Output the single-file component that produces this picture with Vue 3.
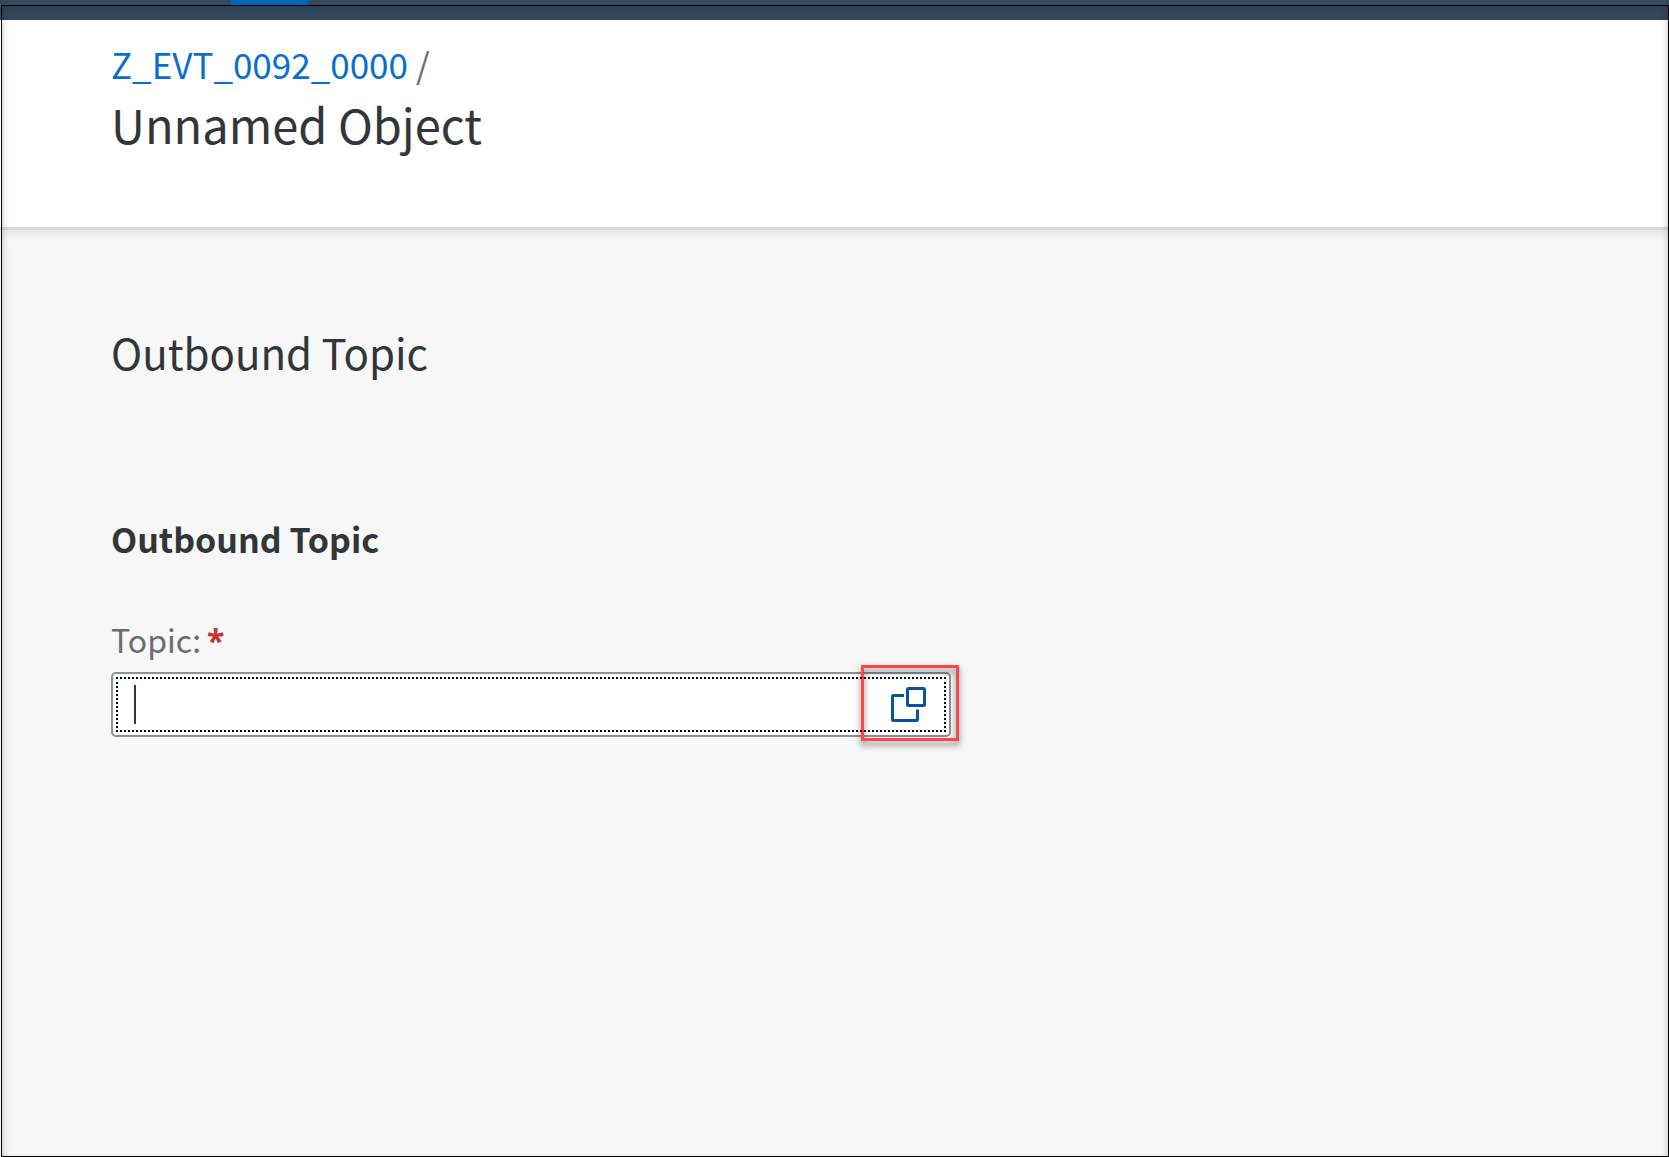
<script setup>
import { ref } from 'vue'

const topic = ref('')
</script>

<template>
  <div class="page">
    <div class="shell"></div>
    <header class="header">
      <nav class="crumbs" aria-label="Breadcrumb">
        <a href="#">Z_EVT_0092_0000</a>
        <span>/</span>
      </nav>
      <h1>Unnamed Object</h1>
    </header>
    <main class="content">
      <h2>Outbound Topic</h2>
      <form @submit.prevent>
        <h3>Outbound Topic</h3>
        <label for="topic">Topic:<b>*</b></label>
        <div class="field">
          <input id="topic" v-model="topic" type="text" required autocomplete="off" />
          <button type="button" aria-label="Select topic">
            <svg viewBox="0 0 36 36" fill="none" stroke="#0854a0" stroke-width="3" stroke-linejoin="round" stroke-linecap="butt">
              <path d="M14 8.500H3.500Q2.500 8.500 2.500 9.500V32.500Q2.500 33.500 3.500 33.500H26.500Q27.500 33.500 27.500 32.500V22.500" />
              <rect x="17.500" y="1.500" width="17" height="17" rx="1" />
            </svg>
          </button>
          <i class="caret"></i>
          <i class="highlight"></i>
        </div>
      </form>
    </main>
    <i class="tab"></i>
    <i class="frame"></i>
  </div>
</template>

<style>
body {
  background: #f7f7f7;
}
</style>

<style scoped>
.page {
  position: relative;
  min-height: 100vh;
  box-sizing: border-box;
  background: #f7f7f7;
  color: #32363a;
  font-family: "Noto Sans CJK SC", "Noto Sans", sans-serif;
}
.shell {
  height: 20px;
  background: #354a5f;
}
.tab {
  position: absolute;
  top: 0;
  left: 231px;
  width: 79px;
  height: 5px;
  background: #0067b8;
  clip-path: polygon(0 0, 100% 0, 75px 100%, 0 100%);
}
.frame {
  position: absolute;
  inset: 5px 0 0 1px;
  border: 1px solid #000;
  box-shadow: inset 0 5px 8px -2px rgba(0, 0, 0, 0.14), inset 5px 0 8px -5px rgba(0, 0, 0, 0.16), inset -5px 0 8px -5px rgba(0, 0, 0, 0.16);
  pointer-events: none;
}
.header {
  height: 207px;
  box-sizing: border-box;
  padding: 20px 111px 0;
  background: #fff;
  box-shadow: 0 3px 0 #d9d9d9, 0 4px 12px rgba(0, 0, 0, 0.12);
}
.crumbs {
  display: flex;
  gap: 8px;
  font-size: 35px;
  line-height: 48px;
  color: #6a6d70;
}
a {
  color: #0a6ed1;
  text-decoration: none;
}
h1,
h2,
h3 {
  margin: 0;
  font-weight: 400;
}
h1 {
  padding-top: 2px;
  font-size: 47px;
  line-height: 68px;
}
.content {
  padding: 97px 111px 0;
}
h2 {
  font-size: 42px;
  line-height: 56px;
}
form {
  padding-top: 135px;
}
h3 {
  font-size: 34px;
  line-height: 48px;
  font-weight: 700;
}
label {
  display: block;
  padding-top: 52px;
  font-size: 32px;
  line-height: 48px;
  color: #6a6d70;
}
label b {
  margin-left: 6px;
  color: #cc3333;
  font-family: "Noto Sans", sans-serif;
  line-height: 1;
}
.field {
  position: relative;
  display: flex;
  width: 59%;
  max-width: 840px;
  height: 65px;
  margin-top: 9px;
  box-sizing: border-box;
  padding: 3px;
  border: 2px solid #89919a;
  border-radius: 5px;
  background: #fff;
}
.field::after {
  content: "";
  position: absolute;
  inset: 3px;
  border: 2px dotted #000;
  pointer-events: none;
}
input {
  flex: 1;
  min-width: 0;
  padding: 0 16px;
  border: 0;
  outline: 0;
  background: transparent;
  font: inherit;
  font-size: 32px;
}
button {
  width: 76px;
  padding: 1px 0 0;
  border: 0;
  background: transparent;
}
svg {
  display: block;
  width: 36px;
  height: 36px;
  margin: auto;
}
.caret {
  position: absolute;
  left: 21px;
  top: 11px;
  width: 2px;
  height: 39px;
  background: #32363a;
}
.highlight {
  position: absolute;
  top: -9px;
  right: -10px;
  width: 92px;
  height: 70px;
  border: 3px solid #ff4545;
  filter: drop-shadow(0 4px 3px rgba(0, 0, 0, 0.5));
  pointer-events: none;
}
</style>
